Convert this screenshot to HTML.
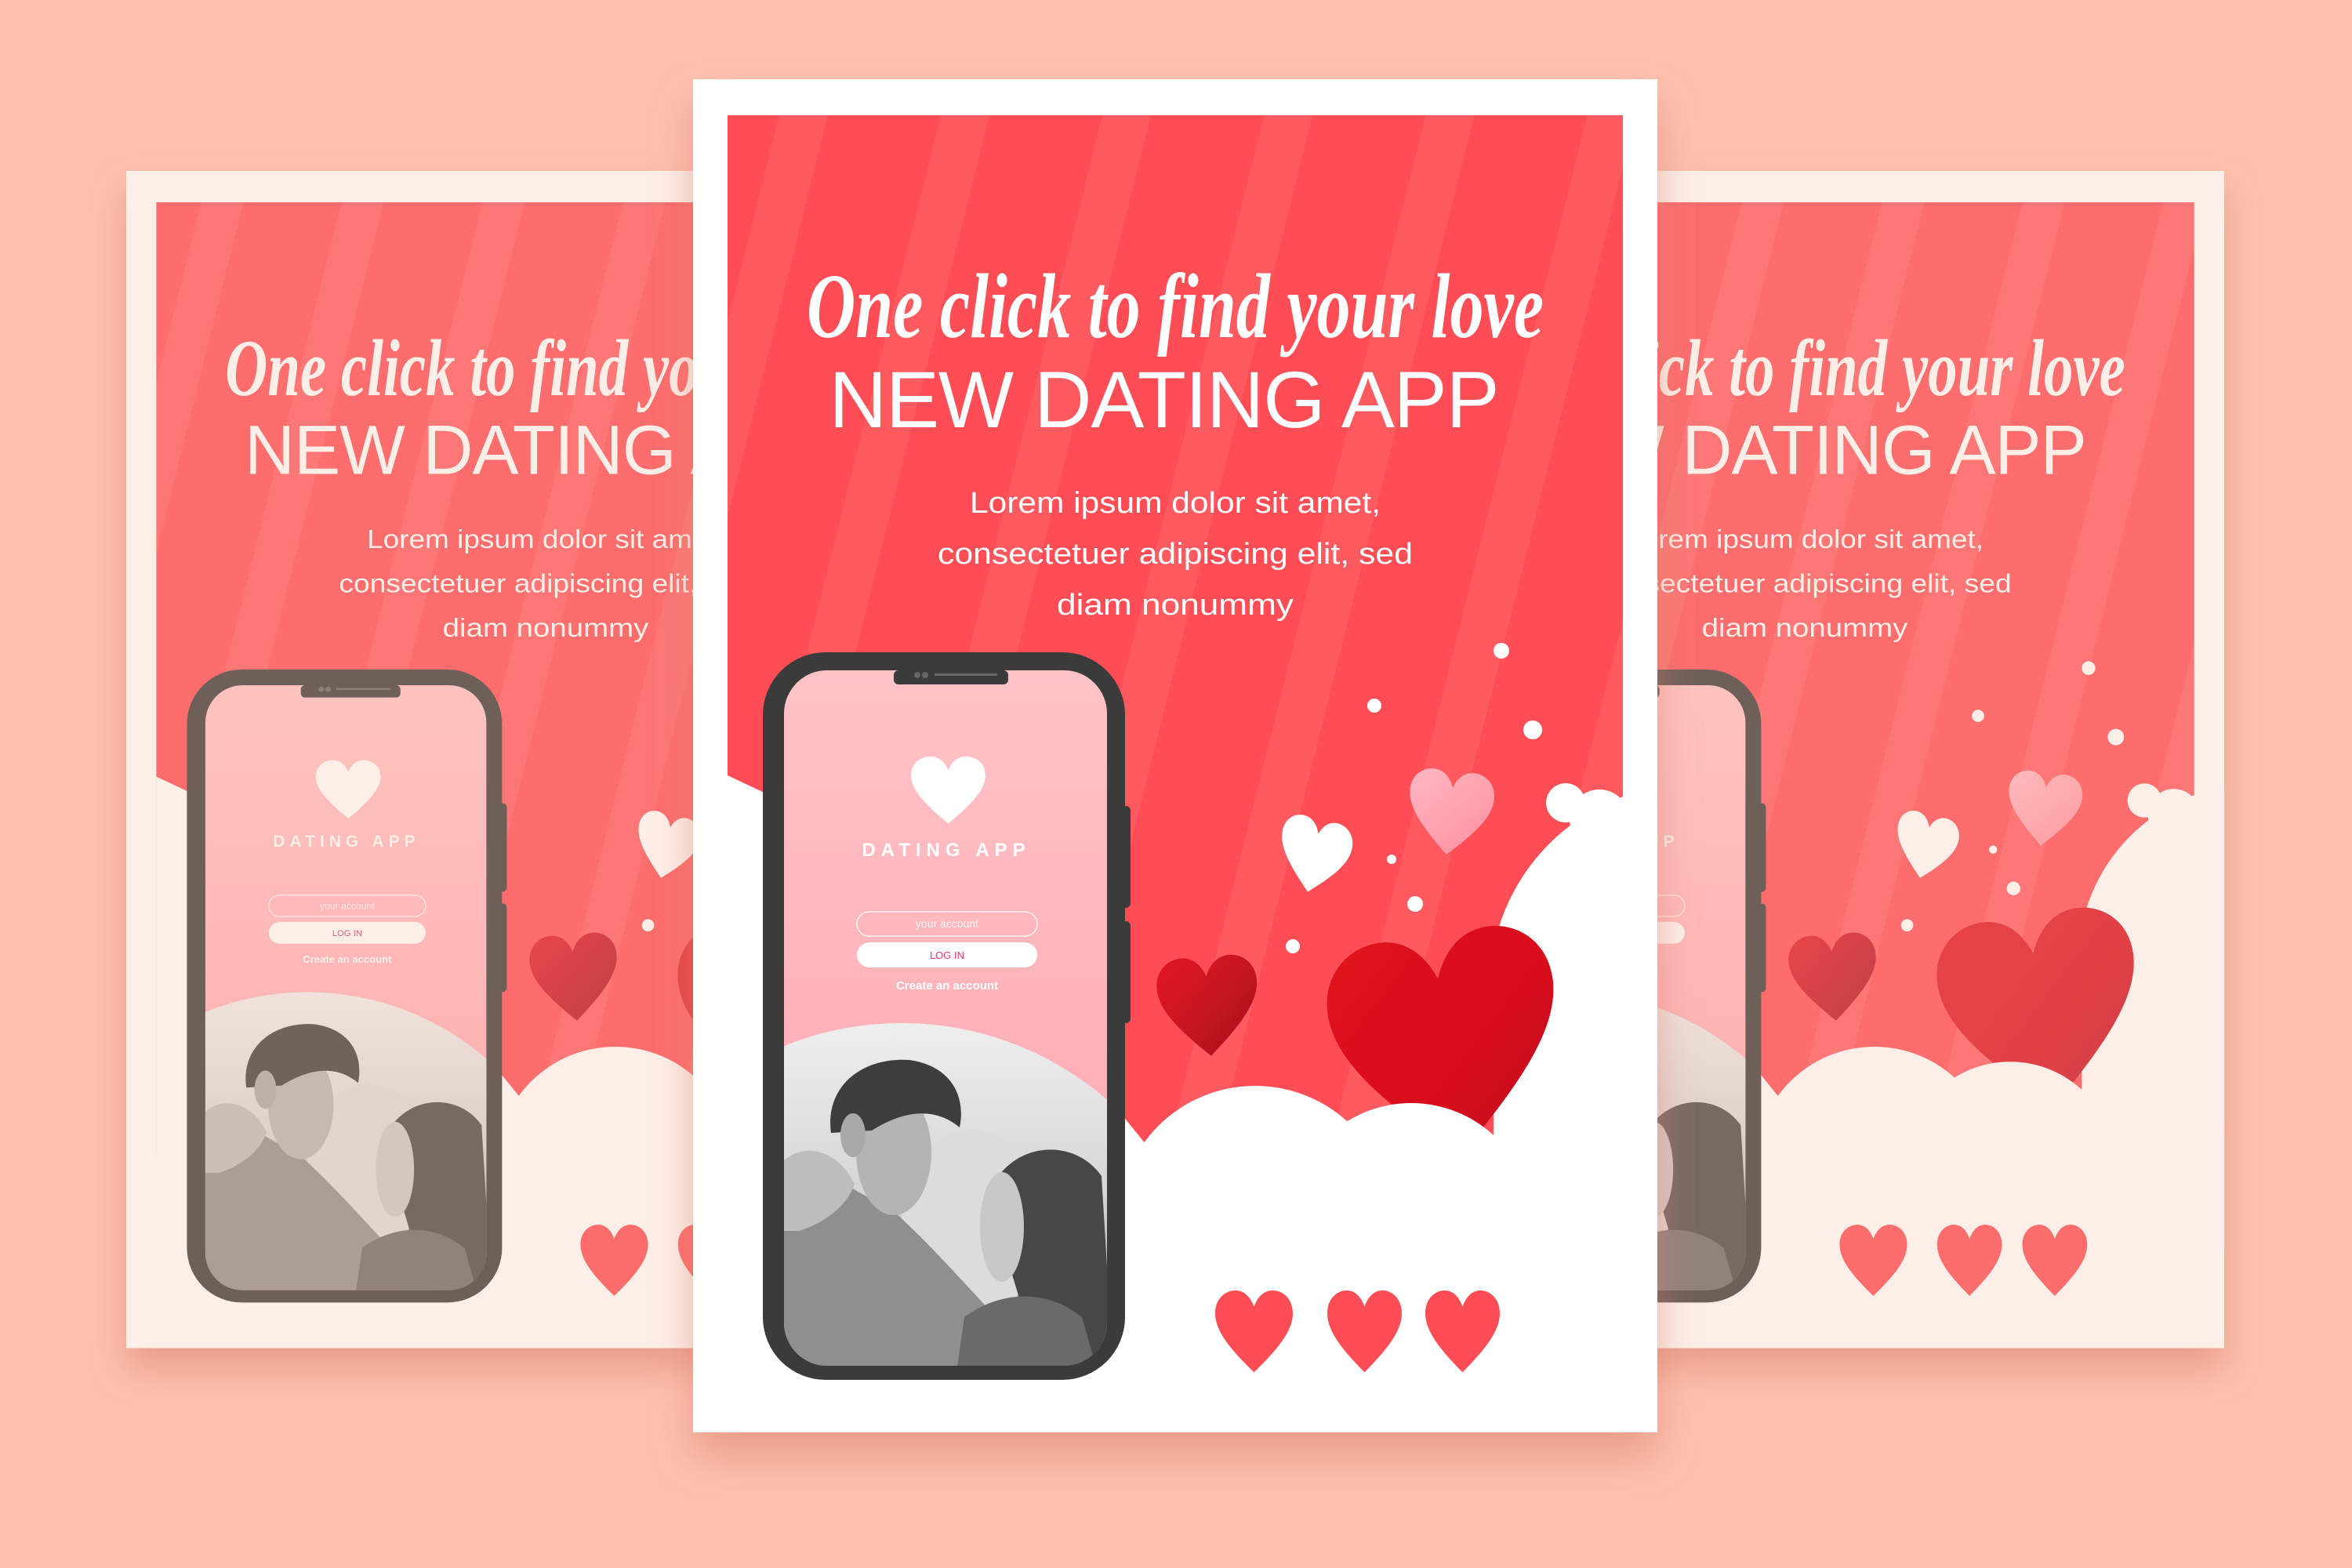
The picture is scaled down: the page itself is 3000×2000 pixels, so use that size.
<!DOCTYPE html>
<html><head><meta charset="utf-8"><style>
html,body{margin:0;padding:0;background:#FDC0AE;}
svg{display:block}
</style></head><body>
<svg width="3000" height="2000" viewBox="0 0 3000 2000" xmlns="http://www.w3.org/2000/svg">
<defs>
<pattern id="st" patternUnits="userSpaceOnUse" width="200" height="200" patternTransform="rotate(14)">
<rect x="0" y="0" width="60" height="200" fill="#ffffff" opacity="0.07"/>
</pattern>
<linearGradient id="scr" x1="0" y1="0" x2="0" y2="1"><stop offset="0" stop-color="#FFC3C6"/><stop offset="1" stop-color="#FFA3AE"/></linearGradient>
<linearGradient id="pk" x1="0" y1="0" x2="1" y2="1"><stop offset="0" stop-color="#FFB8C2"/><stop offset="1" stop-color="#FF8E9E"/></linearGradient>
<linearGradient id="dr" x1="0" y1="0" x2="1" y2="1"><stop offset="0" stop-color="#E41525"/><stop offset="1" stop-color="#A8101C"/></linearGradient>
<linearGradient id="br" x1="0" y1="0" x2="1" y2="1"><stop offset="0" stop-color="#E0121F"/><stop offset="0.6" stop-color="#D8101E"/><stop offset="1" stop-color="#B50F1C"/></linearGradient>
<linearGradient id="ph" x1="0" y1="0" x2="0" y2="1"><stop offset="0" stop-color="#F0F0F0"/><stop offset="0.5" stop-color="#D6D6D6"/><stop offset="1" stop-color="#8E8E8E"/></linearGradient>
<clipPath id="photo"><circle cx="1150" cy="1705" r="400"/></clipPath>
<clipPath id="screen"><rect x="1000" y="855" width="412" height="887" rx="55"/></clipPath>
<clipPath id="card"><rect x="884" y="101" width="1230" height="1726"/></clipPath>
<filter id="sh" x="-10%" y="-10%" width="120%" height="130%"><feDropShadow dx="0" dy="30" stdDeviation="25" flood-color="#D9826C" flood-opacity="0.55"/></filter>
<g id="design">
<rect x="884" y="101" width="1230" height="1726" fill="#fff"/>
<rect x="928" y="147" width="1142" height="1400" fill="#FF4D55"/>
<rect x="928" y="147" width="1142" height="1400" fill="url(#st)"/>
<g fill="#fff"><circle cx="1915" cy="830" r="10"/><circle cx="1753" cy="900" r="9"/><circle cx="1955" cy="931" r="12"/><circle cx="1775" cy="1096" r="6"/><circle cx="1805" cy="1153" r="10"/><circle cx="1649" cy="1207" r="9"/></g>
<path transform="translate(1796,983) scale(1.08,1.19) rotate(6 50 45)" d="M50,90 C20,65 0,45 0,25 C0,10 12,0 26,0 C38,0 46,8 50,18 C54,8 62,0 74,0 C88,0 100,10 100,25 C100,45 80,65 50,90Z" fill="url(#pk)"/>
<path transform="translate(1631,1044) scale(0.91,1.05) rotate(12 50 45)" d="M50,90 C20,65 0,45 0,25 C0,10 12,0 26,0 C38,0 46,8 50,18 C54,8 62,0 74,0 C88,0 100,10 100,25 C100,45 80,65 50,90Z" fill="#fff"/>
<path transform="translate(1477,1220) scale(1.28,1.41) rotate(-4 50 45)" d="M50,90 C20,65 0,45 0,25 C0,10 12,0 26,0 C38,0 46,8 50,18 C54,8 62,0 74,0 C88,0 100,10 100,25 C100,45 80,65 50,90Z" fill="url(#dr)"/>
<g fill="#fff"><circle cx="2160" cy="1260" r="260"/><circle cx="1997" cy="1024" r="25"/><circle cx="2040" cy="1045" r="38"/><rect x="1905" y="1250" width="170" height="300"/></g>
<path transform="translate(1700,1191) scale(2.9,3.15) rotate(-8 50 45)" d="M50,90 C20,65 0,45 0,25 C0,10 12,0 26,0 C38,0 46,8 50,18 C54,8 62,0 74,0 C88,0 100,10 100,25 C100,45 80,65 50,90Z" fill="url(#br)"/>
<g fill="#fff"><circle cx="1601" cy="1560" r="175"/><circle cx="1800" cy="1562" r="155"/><circle cx="2040" cy="1590" r="120"/>
<polygon points="928,989 1100,1070 1300,1260 1470,1470 1500,1500 2070,1500 2070,1827 928,1827"/></g>
<rect x="884" y="101" width="44" height="1726" fill="#fff"/><rect x="2070" y="101" width="44" height="1726" fill="#fff"/>
<g fill="#FF4D55">
<path transform="translate(1550,1646) scale(0.99,1.16)" d="M50,90 C20,65 0,45 0,25 C0,10 12,0 26,0 C38,0 46,8 50,18 C54,8 62,0 74,0 C88,0 100,10 100,25 C100,45 80,65 50,90Z"/>
<path transform="translate(1693,1646) scale(0.95,1.16)" d="M50,90 C20,65 0,45 0,25 C0,10 12,0 26,0 C38,0 46,8 50,18 C54,8 62,0 74,0 C88,0 100,10 100,25 C100,45 80,65 50,90Z"/>
<path transform="translate(1818,1646) scale(0.95,1.16)" d="M50,90 C20,65 0,45 0,25 C0,10 12,0 26,0 C38,0 46,8 50,18 C54,8 62,0 74,0 C88,0 100,10 100,25 C100,45 80,65 50,90Z"/>
</g>
<text x="1499" y="430" text-anchor="middle" font-family="Liberation Serif, serif" font-style="italic" font-weight="bold" font-size="118" fill="#fff" textLength="940" lengthAdjust="spacingAndGlyphs">One click to find your love</text>
<text x="1485" y="545" text-anchor="middle" font-family="Liberation Sans, sans-serif" font-size="102" fill="#fff" textLength="855" lengthAdjust="spacing">NEW DATING APP</text>
<g font-family="Liberation Sans, sans-serif" font-size="38" fill="#fff" text-anchor="middle">
<text x="1499" y="654" textLength="524" lengthAdjust="spacingAndGlyphs">Lorem ipsum dolor sit amet,</text>
<text x="1499" y="719" textLength="606" lengthAdjust="spacingAndGlyphs">consectetuer adipiscing elit, sed</text>
<text x="1499" y="784" textLength="302" lengthAdjust="spacingAndGlyphs">diam nonummy</text></g>
<rect x="1422" y="1028" width="20" height="130" rx="6" fill="#3A3A3A"/><rect x="1422" y="1175" width="20" height="130" rx="6" fill="#3A3A3A"/>
<rect x="973" y="832" width="462" height="928" rx="80" fill="#3A3A3A"/>
<rect x="1000" y="855" width="412" height="887" rx="55" fill="url(#scr)"/>
<g clip-path="url(#screen)"><g clip-path="url(#photo)">
<rect x="990" y="1290" width="430" height="460" fill="url(#ph)"/>
<ellipse cx="1240" cy="1560" rx="90" ry="120" fill="#dcdcdc"/>
<path d="M990,1490 C1040,1480 1090,1520 1140,1545 C1200,1600 1250,1660 1290,1700 L1300,1750 L990,1750Z" fill="#8f8f8f"/>
<path d="M1000,1480 C1030,1455 1070,1470 1090,1510 C1080,1540 1050,1560 1020,1570 L1000,1570Z" fill="#bdbdbd"/>
<ellipse cx="1140" cy="1470" rx="48" ry="80" fill="#b4b4b4"/>
<path d="M1060,1445 C1052,1385 1100,1348 1160,1352 C1215,1360 1232,1400 1224,1438 C1190,1410 1150,1418 1112,1442Z" fill="#3e3e3e"/>
<ellipse cx="1088" cy="1448" rx="16" ry="28" fill="#a9a9a9"/>
<path d="M1262,1520 C1290,1455 1370,1450 1405,1500 L1420,1750 L1320,1750 C1310,1680 1290,1620 1275,1580Z" fill="#474747"/>
<ellipse cx="1278" cy="1565" rx="28" ry="70" fill="#c8c8c8"/>
<path d="M1230,1680 C1270,1650 1330,1640 1380,1680 L1400,1750 L1220,1750Z" fill="#6a6a6a"/>
</g></g>
<rect x="1140" y="855" width="146" height="18" rx="6" fill="#3A3A3A"/>
<circle cx="1170" cy="861" r="4" fill="#666"/><circle cx="1180" cy="861" r="4" fill="#666"/><rect x="1192" y="859" width="80" height="3" fill="#666"/>
<path transform="translate(1162,965) scale(0.95,0.95)" d="M50,90 C20,65 0,45 0,25 C0,10 12,0 26,0 C38,0 46,8 50,18 C54,8 62,0 74,0 C88,0 100,10 100,25 C100,45 80,65 50,90Z" fill="#fff"/>
<text x="1207" y="1092" text-anchor="middle" font-family="Liberation Sans, sans-serif" font-weight="bold" font-size="24" letter-spacing="7" fill="#fff">DATING APP</text>
<rect x="1093" y="1163" width="230" height="31" rx="15.5" fill="none" stroke="#fff" stroke-opacity="0.8" stroke-width="1.5"/>
<text x="1208" y="1183" text-anchor="middle" font-family="Liberation Sans, sans-serif" font-size="14" fill="#fff" fill-opacity="0.85">your account</text>
<rect x="1093" y="1202" width="230" height="32" rx="16" fill="#fff"/>
<text x="1208" y="1223" text-anchor="middle" font-family="Liberation Sans, sans-serif" font-size="13" fill="#E8386A">LOG IN</text>
<text x="1208" y="1262" text-anchor="middle" font-family="Liberation Sans, sans-serif" font-weight="bold" font-size="15" fill="#fff">Create an account</text>
</g>
</defs>

<g transform="translate(161,218) scale(0.87) translate(-884,-101)" filter="url(#sh)">
<g clip-path="url(#card)"><use href="#design"/></g>
<rect x="884" y="101" width="1230" height="1726" fill="#F8C2AD" opacity="0.28"/>
</g>

<g transform="translate(1767,218) scale(0.87) translate(-884,-101)" filter="url(#sh)">
<g clip-path="url(#card)"><use href="#design"/></g>
<rect x="884" y="101" width="1230" height="1726" fill="#F8C2AD" opacity="0.28"/>
</g>

<g filter="url(#sh)">
<g clip-path="url(#card)"><use href="#design"/></g>
</g>
</svg>
</body></html>
